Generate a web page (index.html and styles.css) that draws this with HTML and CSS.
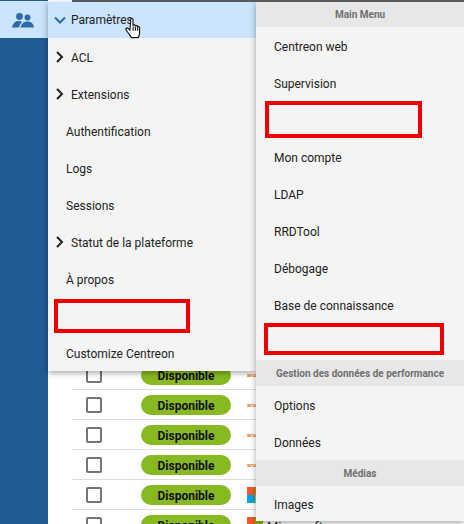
FILE: index.html
```html
<!DOCTYPE html>
<html lang="en">
  <head>
    <meta charset="UTF-8" />
    <title>Centreon</title>
    <link rel="stylesheet" href="styles.css">
  </head>

  <body>
    <div class="sidebar">
      <div class="side-top">
        <svg class="users-icon" width="24" height="18" viewBox="12 10.500 24 18">
          <circle cx="19.500" cy="16" r="3.400" />
          <circle cx="27.500" cy="17" r="3" />
          <path d="M12 27c1-4 3-6.500 6.500-6.500 1.500 0 2.500.3 3.500 1-1.500 1.500-2.500 3.200-3 5.500z" />
          <path d="M20.500 27c.8-3.500 3-6 7-6s6 2.500 6.500 6z" />
        </svg>
      </div>
    </div>

    <div class="page">
      <div class="top-bar"></div>
      <div class="rows">
        <div class="row"><span class="check"></span><span class="pill">Disponible</span><span class="logo-text">aruba</span></div>
        <div class="row"><span class="check"></span><span class="pill">Disponible</span><span class="logo-text">aruba</span></div>
        <div class="row"><span class="check"></span><span class="pill">Disponible</span><span class="logo-text">aruba</span></div>
        <div class="row"><span class="check"></span><span class="pill">Disponible</span><span class="logo-text">aruba</span></div>
        <div class="row"><span class="check"></span><span class="pill">Disponible</span><span class="ms-logo"><i class="orange"></i><i class="lime"></i><i class="blue"></i><i class="yellow"></i></span></div>
        <div class="row"><span class="check"></span><span class="pill">Disponible</span><span class="ms-logo"><i class="orange"></i><i class="lime"></i><i class="blue"></i><i class="yellow"></i></span><span class="row-name">Microsoft</span></div>
      </div>
    </div>

    <div class="menu menu-left">
      <div class="item active">
        <svg class="chev" width="12" height="12" viewBox="0 0 12 12"><path class="down" d="M1 3.500l5 5 5-5" /></svg>
        Paramètres
      </div>
      <div class="item">
        <svg class="chev" width="12" height="12" viewBox="0 0 12 12"><path d="M3 1l5 5-5 5" /></svg>
        ACL
      </div>
      <div class="item">
        <svg class="chev" width="12" height="12" viewBox="0 0 12 12"><path d="M3 1l5 5-5 5" /></svg>
        Extensions
      </div>
      <div class="item plain">Authentification</div>
      <div class="item plain">Logs</div>
      <div class="item plain">Sessions</div>
      <div class="item">
        <svg class="chev" width="12" height="12" viewBox="0 0 12 12"><path d="M3 1l5 5-5 5" /></svg>
        Statut de la plateforme
      </div>
      <div class="item plain">À propos</div>
      <div class="item plain"><span class="redact redact-left"></span></div>
      <div class="item plain">Customize Centreon</div>
    </div>

    <div class="menu menu-right">
      <div class="menu-head first">Main Menu</div>
      <div class="item plain">Centreon web</div>
      <div class="item plain">Supervision</div>
      <div class="item plain"><span class="redact redact-one"></span></div>
      <div class="item plain">Mon compte</div>
      <div class="item plain">LDAP</div>
      <div class="item plain">RRDTool</div>
      <div class="item plain">Débogage</div>
      <div class="item plain">Base de connaissance</div>
      <div class="item plain"><span class="redact redact-two"></span></div>
      <div class="menu-head">Gestion des données de performance</div>
      <div class="item plain">Options</div>
      <div class="item plain">Données</div>
      <div class="menu-head">Médias</div>
      <div class="item plain last">Images</div>
    </div>

    <svg class="cursor" width="18" height="24" viewBox="0 0 22 28">
      <path d="M7 2.500c0-1.800 2.800-1.800 2.800 0v7.500c0-1.500 2.700-1.500 2.700 0v1c0-1.500 2.700-1.500 2.700 0v1c0-1.400 2.600-1.400 2.600 0.200v6.800c0 2.500-1 3.500-1.500 5.500h-8.500c-.8-2-2-3-3.500-5l-3-4.500c-1-1.800 1.200-3 2.500-1.800l2.200 2.300z" />
      <path class="fingers" d="M10 11v5M12.800 11.500v4.500M15.500 12v4" />
    </svg>
  </body>
</html>
```

FILE: styles.css
```css
html,
body {
  height: 100%;
}

body {
  font-family: "Roboto", sans-serif;
  background-color: #ffffff;
  margin: 0;
  padding: 0;
  overflow: hidden;
  position: relative;
  display: flex;
}

.sidebar {
  width: 48px;
  flex: none;
  background-color: #205b93;
}

.side-top {
  height: 37px;
  margin-top: 1px;
  background-color: #c9e4fb;
  display: flex;
  align-items: center;
  justify-content: center;
}

.users-icon {
  fill: #2e6aa8;
}

.page {
  flex: 1;
  padding-left: 24px;
}

.top-bar {
  height: 2px;
  margin-bottom: 358px;
  background-color: #5c5f63;
}

.row {
  height: 29px;
  border-bottom: 1px solid #dddddd;
  display: flex;
  align-items: center;
}

.check {
  width: 12px;
  height: 12px;
  margin-left: 14px;
  border: 2px solid #757575;
  border-radius: 2px;
  flex: none;
}

.pill {
  width: 90px;
  height: 20px;
  margin: 1px 0 0 39px;
  flex: none;
  border-radius: 10px;
  background-color: #88b922;
  color: #111111;
  font-size: 12px;
  font-weight: 700;
  line-height: 22px;
  text-align: center;
}

.logo-text {
  margin-left: 16px;
  color: #e8792b;
  font-size: 6px;
  font-weight: 700;
}

.ms-logo {
  margin-left: 16px;
  width: 16px;
  flex: none;
  display: grid;
  grid-template-columns: 8px 8px;
  grid-auto-rows: 8px;
}

.ms-logo i.orange {
  background-color: #f1582a;
}

.ms-logo i.lime {
  background-color: #7fba00;
}

.ms-logo i.blue {
  background-color: #00a4ef;
}

.ms-logo i.yellow {
  background-color: #ffb900;
}

.row-name {
  margin: 3px 0 0 4px;
  color: #222222;
  font-size: 13px;
}

.menu {
  position: absolute;
  background-color: #f4f4f4;
  box-shadow: 0 2px 6px rgba(0, 0, 0, 0.35);
  color: #222222;
  font-size: 12px;
}

.menu-left {
  left: 48px;
  top: 2px;
  width: 208px;
}

.menu-right {
  left: 256px;
  top: 2px;
  width: 208px;
}

.menu-head {
  height: 26px;
  background-color: #e7e7e7;
  color: #6f6f6f;
  font-size: 10px;
  font-weight: 700;
  line-height: 27px;
  text-align: center;
}

.menu-head.first {
  height: 25px;
  line-height: 25px;
}

.item {
  box-sizing: border-box;
  height: 37px;
  padding: 2px 0 0 23px;
  display: flex;
  align-items: center;
  position: relative;
}

.item.active {
  height: 36px;
  padding-top: 0;
  background-color: #c9e4fb;
}

.item.plain {
  padding-left: 18px;
}

.item.last {
  height: 35px;
  padding-top: 3px;
}

.chev {
  position: absolute;
  left: 6px;
  top: 13px;
  fill: none;
  stroke: #222222;
  stroke-width: 2;
}

.active .chev {
  top: 12px;
}

.chev .down {
  stroke: #2e6aa8;
}

.redact {
  position: absolute;
  border: 4px solid #ee0000;
}

.redact-left {
  left: 6px;
  top: 2px;
  width: 128px;
  height: 26px;
}

.redact-one {
  left: 9px;
  top: 0;
  width: 149px;
  height: 29px;
}

.redact-two {
  left: 8px;
  top: 0;
  width: 172px;
  height: 24px;
}

.cursor {
  position: absolute;
  left: 125px;
  top: 17px;
  fill: #ffffff;
  stroke: #111111;
  stroke-width: 1.400;
}

.cursor .fingers {
  fill: none;
}
```
